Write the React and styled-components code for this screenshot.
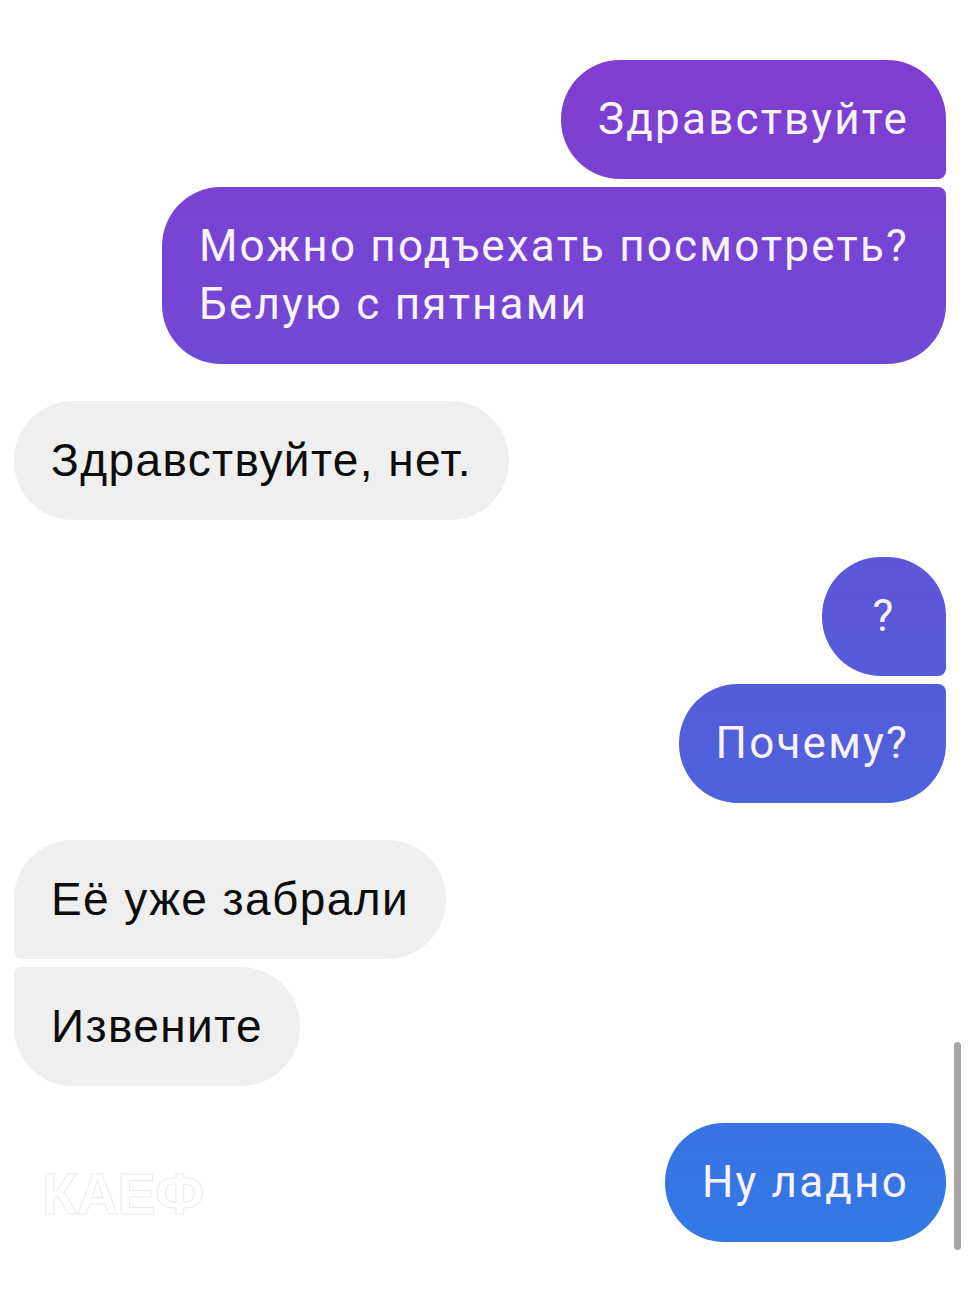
import styled, { createGlobalStyle } from 'styled-components';

const GlobalStyle = createGlobalStyle`
    html, body {
        margin: 0;
        padding: 0;
        background: #ffffff;
    }
    body {
        font-family: "Liberation Sans", Arial, sans-serif;
    }
`

const Screen = styled.div`
    position: relative;
    width: 970px;
    height: 1293px;
    overflow: hidden;
    background: #ffffff;
`

const Thread = styled.div`
    display: flex;
    flex-direction: column;
    gap: 37px;
    padding: 60px 24px 0 14px;
`

const Group = styled.div`
    display: flex;
    flex-direction: column;
    gap: 8px;
    align-items: ${props => props.mine ? 'flex-end' : 'flex-start'};
`

const BIG = 59
const SMALL = 8

// corner radii follow the bubble's place in its group
const radius = (mine, first, last) => {
    const tl = !mine && !first ? SMALL : BIG
    const bl = !mine && !last ? SMALL : BIG
    const tr = mine && !first ? SMALL : BIG
    const br = mine && !last ? SMALL : BIG
    return `${tl}px ${tr}px ${br}px ${bl}px`
}

const Bubble = styled.div`
    box-sizing: border-box;
    min-width: 124px;
    padding: 30px 37px 31px;
    border-radius: ${props => radius(props.mine, props.first, props.last)};
    line-height: 58px;
    text-align: center;
    white-space: pre-line;
    ${props => props.mine ? `
        font-family: Roboto, "Liberation Sans", sans-serif;
        font-size: 44px;
        letter-spacing: 2.2px;
        text-align: left;
        color: #f8f2fb;
        background: linear-gradient(180deg, #843acf 0%, #7446d3 22%, #5b58d8 48%, #4a66dc 65%, #3d70e0 80%, #2f7be6 100%);
        background-attachment: fixed;
    ` : `
        font-family: "Liberation Sans", Arial, sans-serif;
        font-size: 46px;
        letter-spacing: 1.4px;
        text-align: left;
        color: #0d0d0d;
        background: #efefef;
    `}
    ${props => props.short && 'text-align: center;'}
`

const Watermark = styled.div`
    position: absolute;
    left: 42px;
    top: 1160px;
    font-family: "Liberation Sans Narrow", "Liberation Sans", sans-serif;
    font-weight: 700;
    font-size: 58px;
    letter-spacing: -1px;
    color: #ffffff;
    -webkit-text-stroke: 1px #ececec;
`

const ScrollThumb = styled.div`
    position: absolute;
    left: 954px;
    top: 1042px;
    width: 7px;
    height: 208px;
    border-radius: 4px;
    background: #a6a6a6;
`

const conversation = [
    { mine: true, lines: ['Здравствуйте', 'Можно подъехать посмотреть?\nБелую с пятнами'] },
    { mine: false, lines: ['Здравствуйте, нет.'] },
    { mine: true, lines: ['?', 'Почему?'] },
    { mine: false, lines: ['Её уже забрали', 'Извените'] },
    { mine: true, lines: ['Ну ладно'] },
]

const App = () => {
    return (
        <Screen>
            <GlobalStyle />
            <Thread>
                {conversation.map((group, g) => (
                    <Group key={g} mine={group.mine}>
                        {group.lines.map((text, i) => (
                            <Bubble
                                key={i}
                                mine={group.mine}
                                short={text.length < 3}
                                first={i === 0}
                                last={i === group.lines.length - 1}
                            >
                                {text}
                            </Bubble>
                        ))}
                    </Group>
                ))}
            </Thread>
            <Watermark>КАЕФ</Watermark>
            <ScrollThumb />
        </Screen>
    )
}

export default App
